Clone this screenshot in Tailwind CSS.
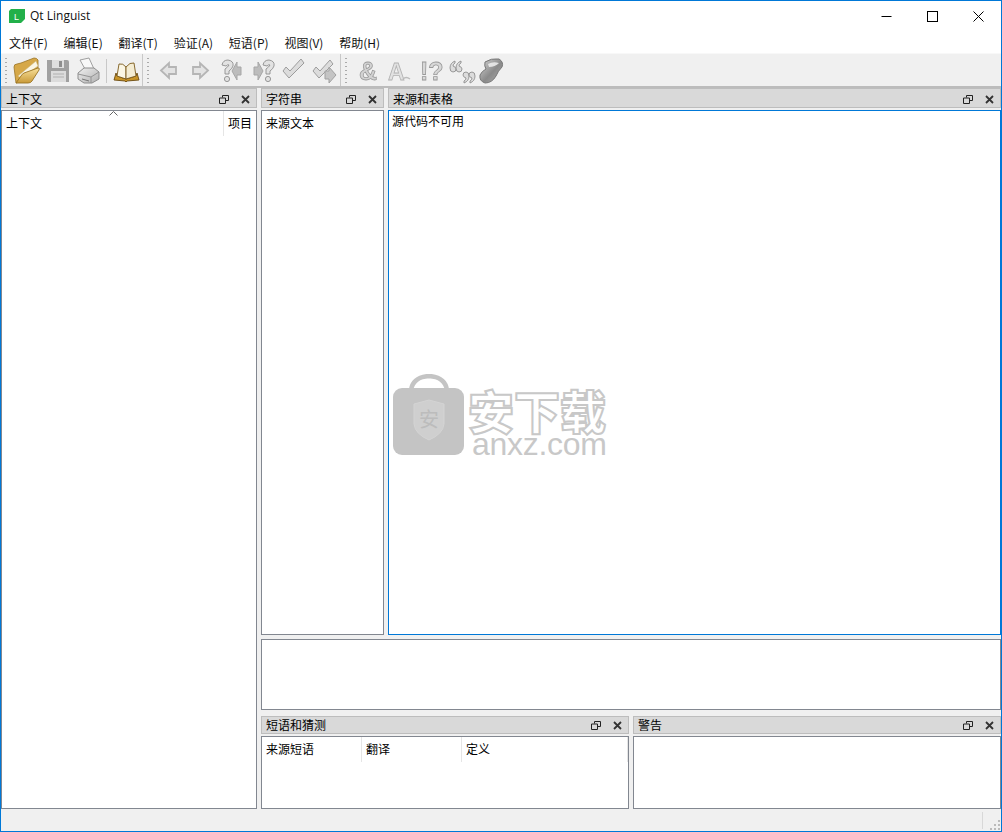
<!doctype html>
<html lang="zh">
<head>
<meta charset="utf-8">
<script src="https://cdn.jsdelivr.net/npm/@tailwindcss/browser@4"></script>
<title>Qt Linguist</title>
</head>
<body class="m-0 overflow-hidden bg-white">
<div class="relative flex h-[832px] w-[1002px] flex-col border border-[#0078d7] bg-[#f0f0f0] text-[12px] leading-none text-black [font-family:'Noto_Sans_CJK_SC','Noto_Sans',sans-serif]">

  <!-- Title bar -->
  <div class="flex h-[30px] shrink-0 items-center bg-white">
    <svg class="ml-[8px] h-[14px] w-[16px]" viewBox="0 0 16 14"><path d="M2 0H16V10L12 14H0V2Z" fill="#22b04a"/><text x="5" y="11" font-size="9" fill="#fff" font-family="Liberation Sans">L</text></svg>
    <span class="ml-[5px] text-[12px] text-[#111] [font-family:'Open_Sans',sans-serif]">Qt Linguist</span>
    <div class="ml-auto flex h-full items-center">
      <div class="flex h-full w-[46px] items-center justify-center"><svg class="h-[11px] w-[11px]" viewBox="0 0 11 11"><path d="M0.5 5.500H10.500" stroke="#000"/></svg></div>
      <div class="flex h-full w-[46px] items-center justify-center"><svg class="h-[11px] w-[11px]" viewBox="0 0 11 11"><rect x=".5" y=".5" width="10" height="10" fill="none" stroke="#000"/></svg></div>
      <div class="flex h-full w-[46px] items-center justify-center"><svg class="h-[11px] w-[11px]" viewBox="0 0 11 11"><path d="M.5 .5L10.500 10.500M10.500 .5L.5 10.500" stroke="#000"/></svg></div>
    </div>
  </div>

  <!-- Menu bar -->
  <div class="flex h-[22px] shrink-0 items-center gap-[15.8px] bg-white pl-[8px] pt-[1px] text-[12px] text-[#111]">
    <span>文件(F)</span><span>编辑(E)</span><span>翻译(T)</span><span>验证(A)</span><span>短语(P)</span><span>视图(V)</span><span>帮助(H)</span>
  </div>

  <!-- Toolbar -->
  <div class="relative h-[35px] shrink-0 border-t border-b-2 border-t-[#f8f8f8] border-b-[#bcbcbc] bg-[#f0f0f0]">
    <svg class="absolute left-0 top-0 h-[32px] w-[520px] overflow-visible" viewBox="0 0 520 32">
      <defs>
        <linearGradient id="fold" x1="0" y1="0" x2="0" y2="1"><stop offset="0" stop-color="#f8e09a"/><stop offset="1" stop-color="#c99a38"/></linearGradient>
        <linearGradient id="gr" x1="0" y1="0" x2="1" y2="1"><stop offset="0" stop-color="#f0f0f0"/><stop offset="1" stop-color="#b0b0b0"/></linearGradient>
        <linearGradient id="dk" x1="0" y1="0" x2="1" y2="1"><stop offset="0" stop-color="#d8d8d8"/><stop offset=".55" stop-color="#8a8a8a"/><stop offset="1" stop-color="#b0b0b0"/></linearGradient>
      </defs>
      <g fill="#aaa">
        <rect x="4" y="4" width="2" height="1"/><rect x="4" y="8" width="2" height="1"/><rect x="4" y="12" width="2" height="1"/><rect x="4" y="16" width="2" height="1"/><rect x="4" y="20" width="2" height="1"/><rect x="4" y="24" width="2" height="1"/><rect x="4" y="28" width="2" height="1"/>
        <rect x="146" y="4" width="2" height="1"/><rect x="146" y="8" width="2" height="1"/><rect x="146" y="12" width="2" height="1"/><rect x="146" y="16" width="2" height="1"/><rect x="146" y="20" width="2" height="1"/><rect x="146" y="24" width="2" height="1"/><rect x="146" y="28" width="2" height="1"/>
        <rect x="344" y="4" width="2" height="1"/><rect x="344" y="8" width="2" height="1"/><rect x="344" y="12" width="2" height="1"/><rect x="344" y="16" width="2" height="1"/><rect x="344" y="20" width="2" height="1"/><rect x="344" y="24" width="2" height="1"/><rect x="344" y="28" width="2" height="1"/>
      </g>
      <path d="M105.500 5V29M141.500 0V32M339.500 0V32" stroke="#c8c8c8" fill="none"/>

      <!-- open folder -->
      <path d="M15 29L13 13Q13 10 16 10L20 9L33 4Q36 4 37 6L37 14L25 26Z" fill="#d6a848" stroke="#9a7424" stroke-width=".8"/>
      <path d="M17 22L35 7L37 12L20 24Z" fill="#fbf6e4" stroke="#cbb477" stroke-width=".5"/>
      <path d="M15 29L20 22Q21 20 23 19L37 14Q39 14 38 16L31 27Q30 29 27 29Z" fill="url(#fold)" stroke="#9a7424" stroke-width=".9"/>
      <!-- save -->
      <path d="M46 6H66Q68 6 68 8V28H48Q46 28 46 26Z" fill="#a0a0a0"/>
      <rect x="51" y="6" width="12" height="8" fill="#dfdfdf"/><rect x="58" y="7" width="3" height="6" fill="#8e8e8e"/>
      <rect x="50" y="17" width="15" height="11" fill="#dcdcdc"/><path d="M52 20H63M52 23H63" stroke="#b0b0b0"/>
      <!-- print -->
      <path d="M79 6L88 4L93 15H84Z" fill="#f8f8f8" stroke="#a0a0a0"/>
      <path d="M77 19L83 14H93L98 18V25L91 29H83L77 25Z" fill="url(#gr)" stroke="#8e8e8e"/>
      <path d="M77 20L90 23L98 18M90 23V29" fill="none" stroke="#949494"/>
      <path d="M81 25L88 27" stroke="#777"/>
      <!-- book -->
      <path d="M113 26L115 19L116 22L125 25L135 22L136 19L138 26L126 27Q125 29 124 27Z" fill="#c89428" stroke="#6a4a10" stroke-width=".9"/>
      <path d="M116 22L118 10Q122 9 125 13V25Z" fill="#fbf6e4" stroke="#7a5a1c" stroke-width=".9"/>
      <path d="M125 13Q129 8 133 9L135 22L125 25Z" fill="#f4ecd2" stroke="#7a5a1c" stroke-width=".9"/>

      <g class="blur-[0.35px]">
        <!-- back / forward -->
        <path d="M160 16.500L168 9V13H175V20H168V24Z" fill="#e3e3e3" stroke="#b5b5b5" stroke-width="1.800"/>
        <path d="M207 16.500L199 9V13H192V20H199V24Z" fill="#e3e3e3" stroke="#b5b5b5" stroke-width="1.800"/>

        <!-- ? with arrow -->
        <path d="M221 11Q222 6 227 6Q233 7 232 12Q231 15 228 17V20H224V15Q227 13 228 11Q227 10 225 12Z" fill="#e2e2e2" stroke="#8f8f8f" stroke-width=".9"/>
        <circle cx="226" cy="25" r="2.600" fill="#e2e2e2" stroke="#8f8f8f" stroke-width=".9"/>
        <path d="M231 17L236 8V13H240V21H236V26Z" fill="#bcbcbc" stroke="#a6a6a6"/>
        <path d="M262 17L257 8V13H253V21H257V26Z" fill="#bcbcbc" stroke="#a6a6a6"/>
        <path d="M262 11Q263 6 268 6Q274 7 273 12Q272 15 269 17V20H265V15Q268 13 269 11Q268 10 266 12Z" fill="#e2e2e2" stroke="#8f8f8f" stroke-width=".9"/>
        <circle cx="267" cy="25" r="2.600" fill="#e2e2e2" stroke="#8f8f8f" stroke-width=".9"/>

        <!-- check -->
        <path d="M282 17L285 13L289 17L300 5L303 9L288 24Z" fill="#dcdcdc" stroke="#9c9c9c"/>
        <path d="M312 17L315 13L319 17L329 6L332 10L318 24Z" fill="#dcdcdc" stroke="#9c9c9c"/>
        <path d="M328 13L335 21L328 29V25H324V17H328Z" fill="#c4c4c4" stroke="#a0a0a0"/>

        <!-- validation -->
        <text x="358" y="26" font-size="25" font-weight="700" fill="#d2d2d2" stroke="#9b9b9b" stroke-width=".8" font-family="Liberation Sans">&amp;</text>
        <text x="387" y="26" font-size="23" font-weight="700" fill="#e2e2e2" stroke="#b2b2b2" stroke-width=".8" font-family="Liberation Sans">A</text>
        <path d="M402 25Q405 22 409 25" fill="none" stroke="#bcbcbc" stroke-width="1.500"/>
        <text x="419" y="26" font-size="25" font-weight="700" fill="#d8d8d8" stroke="#999" stroke-width=".8" font-family="Liberation Sans">!?</text>
        <g fill="#dcdcdc" stroke="#8f8f8f" stroke-width=".9">
          <path d="M454 7Q449 9 449 14Q449 18 452 18Q455 18 455 15Q455 13 452 12Q452 10 454 9Z"/>
          <path d="M460 7Q455 9 455 14Q455 18 458 18Q461 18 461 15Q461 13 458 12Q458 10 460 9Z"/>
          <path d="M463 29Q468 27 468 22Q468 18 465 18Q462 18 462 21Q462 23 465 24Q465 26 463 27Z"/>
          <path d="M469 29Q474 27 474 22Q474 18 471 18Q468 18 468 21Q468 23 471 24Q471 26 469 27Z"/>
        </g>
        <path d="M484 8Q490 4 498 5Q503 8 501 13Q497 17 495 22Q491 29 484 29Q478 27 479 21Q481 17 485 15Q483 12 484 8Z" fill="url(#dk)" stroke="#777"/>
        <path d="M487 10Q492 7 498 9Q494 13 488 13Z" fill="#f0f0f0" opacity=".85"/>
      </g>
    </svg>
  </div>

  <!-- Dock area -->
  <div class="flex min-h-0 flex-1 gap-[4px]">

    <!-- Context dock -->
    <div class="flex w-[256px] shrink-0 flex-col">
      <div class="flex h-[20px] shrink-0 items-center border border-[#bdbdbd] bg-[#d9d9d9] pl-[4px] pt-[2px]">
        <span>上下文</span>
        <div class="ml-auto flex items-center gap-[12px] pr-[6px]">
          <svg class="h-[9px] w-[10px]" viewBox="0 0 10 9"><path d="M3.500 2.500V.5H9.500V5.500H6.500M.5 3H6.500V8.500H.5Z" fill="none" stroke="#222"/></svg>
          <svg class="h-[9px] w-[9px]" viewBox="0 0 9 9"><path d="M1 1L8 8M8 1L1 8" stroke="#333" stroke-width="1.800"/></svg>
        </div>
      </div>
      <div class="relative mt-[2px] min-h-0 flex-1 border border-[#828790] bg-white">
        <svg class="absolute left-[107px] top-[0px] h-[5px] w-[9px]" viewBox="0 0 9 5"><path d="M.5 4.500L4.500 .5L8.500 4.500" fill="none" stroke="#666"/></svg>
        <div class="flex h-[25px] items-center">
          <span class="mb-[2px] ml-[4px] w-[217px]">上下文</span>
          <div class="flex h-full flex-1 items-center border-l border-[#e5e5e5] pb-[2px] pl-[4px]">项目</div>
        </div>
      </div>
    </div>

    <!-- Right side -->
    <div class="flex min-w-0 flex-1 flex-col">
      <div class="flex h-[547px] shrink-0 gap-[4px]">
        <!-- Strings dock -->
        <div class="flex w-[123px] shrink-0 flex-col">
          <div class="flex h-[20px] shrink-0 items-center border border-[#bdbdbd] bg-[#d9d9d9] pl-[4px] pt-[2px]">
            <span>字符串</span>
            <div class="ml-auto flex items-center gap-[12px] pr-[6px]">
              <svg class="h-[9px] w-[10px]" viewBox="0 0 10 9"><path d="M3.500 2.500V.5H9.500V5.500H6.500M.5 3H6.500V8.500H.5Z" fill="none" stroke="#222"/></svg>
              <svg class="h-[9px] w-[9px]" viewBox="0 0 9 9"><path d="M1 1L8 8M8 1L1 8" stroke="#333" stroke-width="1.800"/></svg>
            </div>
          </div>
          <div class="mt-[2px] min-h-0 flex-1 border border-[#828790] bg-white">
            <div class="flex h-[25px] items-center pb-[2px] pl-[4px]">来源文本</div>
          </div>
        </div>
        <!-- Sources dock -->
        <div class="flex min-w-0 flex-1 flex-col">
          <div class="flex h-[20px] shrink-0 items-center border border-[#bdbdbd] bg-[#d9d9d9] pl-[4px] pt-[2px]">
            <span>来源和表格</span>
            <div class="ml-auto flex items-center gap-[12px] pr-[6px]">
              <svg class="h-[9px] w-[10px]" viewBox="0 0 10 9"><path d="M3.500 2.500V.5H9.500V5.500H6.500M.5 3H6.500V8.500H.5Z" fill="none" stroke="#222"/></svg>
              <svg class="h-[9px] w-[9px]" viewBox="0 0 9 9"><path d="M1 1L8 8M8 1L1 8" stroke="#333" stroke-width="1.800"/></svg>
            </div>
          </div>
          <div class="mt-[2px] min-h-0 flex-1 border border-[#0078d7] bg-white pl-[3px] pt-[4px]">
            <span>源代码不可用</span>
          </div>
        </div>
      </div>

      <!-- Editor -->
      <div class="mt-[4px] h-[71px] shrink-0 border border-[#828790] bg-white"></div>

      <!-- Bottom docks -->
      <div class="mt-[6px] flex min-h-0 flex-1 gap-[4px]">
        <div class="flex w-[368px] shrink-0 flex-col">
          <div class="flex h-[18px] shrink-0 items-center border border-[#bdbdbd] bg-[#d9d9d9] pl-[4px]">
            <span>短语和猜测</span>
            <div class="ml-auto flex items-center gap-[12px] pr-[6px]">
              <svg class="h-[9px] w-[10px]" viewBox="0 0 10 9"><path d="M3.500 2.500V.5H9.500V5.500H6.500M.5 3H6.500V8.500H.5Z" fill="none" stroke="#222"/></svg>
              <svg class="h-[9px] w-[9px]" viewBox="0 0 9 9"><path d="M1 1L8 8M8 1L1 8" stroke="#333" stroke-width="1.800"/></svg>
            </div>
          </div>
          <div class="mt-[2px] min-h-0 flex-1 border border-[#828790] bg-white">
            <div class="flex h-[25px] items-center">
              <div class="flex h-full w-[100px] items-center border-r border-[#e5e5e5] pb-[2px] pl-[4px]">来源短语</div>
              <div class="flex h-full w-[100px] items-center border-r border-[#e5e5e5] pb-[2px] pl-[4px]">翻译</div>
              <div class="flex h-full flex-1 items-center border-r border-[#e5e5e5] pb-[2px] pl-[4px]">定义</div>
            </div>
          </div>
        </div>
        <div class="flex min-w-0 flex-1 flex-col">
          <div class="flex h-[18px] shrink-0 items-center border border-[#bdbdbd] bg-[#d9d9d9] pl-[4px]">
            <span>警告</span>
            <div class="ml-auto flex items-center gap-[12px] pr-[6px]">
              <svg class="h-[9px] w-[10px]" viewBox="0 0 10 9"><path d="M3.500 2.500V.5H9.500V5.500H6.500M.5 3H6.500V8.500H.5Z" fill="none" stroke="#222"/></svg>
              <svg class="h-[9px] w-[9px]" viewBox="0 0 9 9"><path d="M1 1L8 8M8 1L1 8" stroke="#333" stroke-width="1.800"/></svg>
            </div>
          </div>
          <div class="mt-[2px] min-h-0 flex-1 border border-[#828790] bg-white"></div>
        </div>
      </div>
    </div>
  </div>

  <!-- Status bar -->
  <div class="flex h-[22px] shrink-0 items-center justify-end bg-[#f0f0f0]">
    <div class="h-[17px] w-px bg-[#d8d8d8]"></div>
    <svg class="ml-[7px] mt-[8px] h-[11px] w-[11px]" viewBox="0 0 11 11"><g fill="#bbb"><rect x="8" y="1" width="2" height="2"/><rect x="4" y="5" width="2" height="2"/><rect x="8" y="5" width="2" height="2"/><rect x="0" y="9" width="2" height="2"/><rect x="4" y="9" width="2" height="2"/><rect x="8" y="9" width="2" height="2"/></g></svg>
  </div>

  <!-- Watermark -->
  <div class="pointer-events-none absolute left-[392px] top-[373px] h-[82px] w-[216px]">
    <svg class="absolute left-0 top-0 h-[82px] w-[72px]" viewBox="0 0 72 82">
      <path d="M18 16Q20 3 36 2Q52 3 54 16" fill="none" stroke="#c4c4c4" stroke-width="4.500"/>
      <rect x="0" y="14" width="71" height="67" rx="9" fill="#c4c4c4"/>
      <path d="M21 30L36 26L51 30V50Q50 60 36 66Q22 60 21 50Z" fill="#cfcfcf" stroke="#d4d4d4"/>
      <text x="36" y="53" text-anchor="middle" font-size="20" fill="#bcbcbc" font-family="Noto Sans CJK SC">安</text>
    </svg>
    <span class="absolute left-[75px] top-[15px] whitespace-nowrap text-[46px] leading-[40px] font-black text-white [-webkit-text-stroke:2px_#c8c8c8]">安下载</span>
    <span class="absolute left-[79px] top-[57px] text-[32px] leading-[26px] tracking-[-0.3px] text-[#c8c8c8] [font-family:'Liberation_Sans',sans-serif]">anxz.com</span>
  </div>
</div>
</body>
</html>
